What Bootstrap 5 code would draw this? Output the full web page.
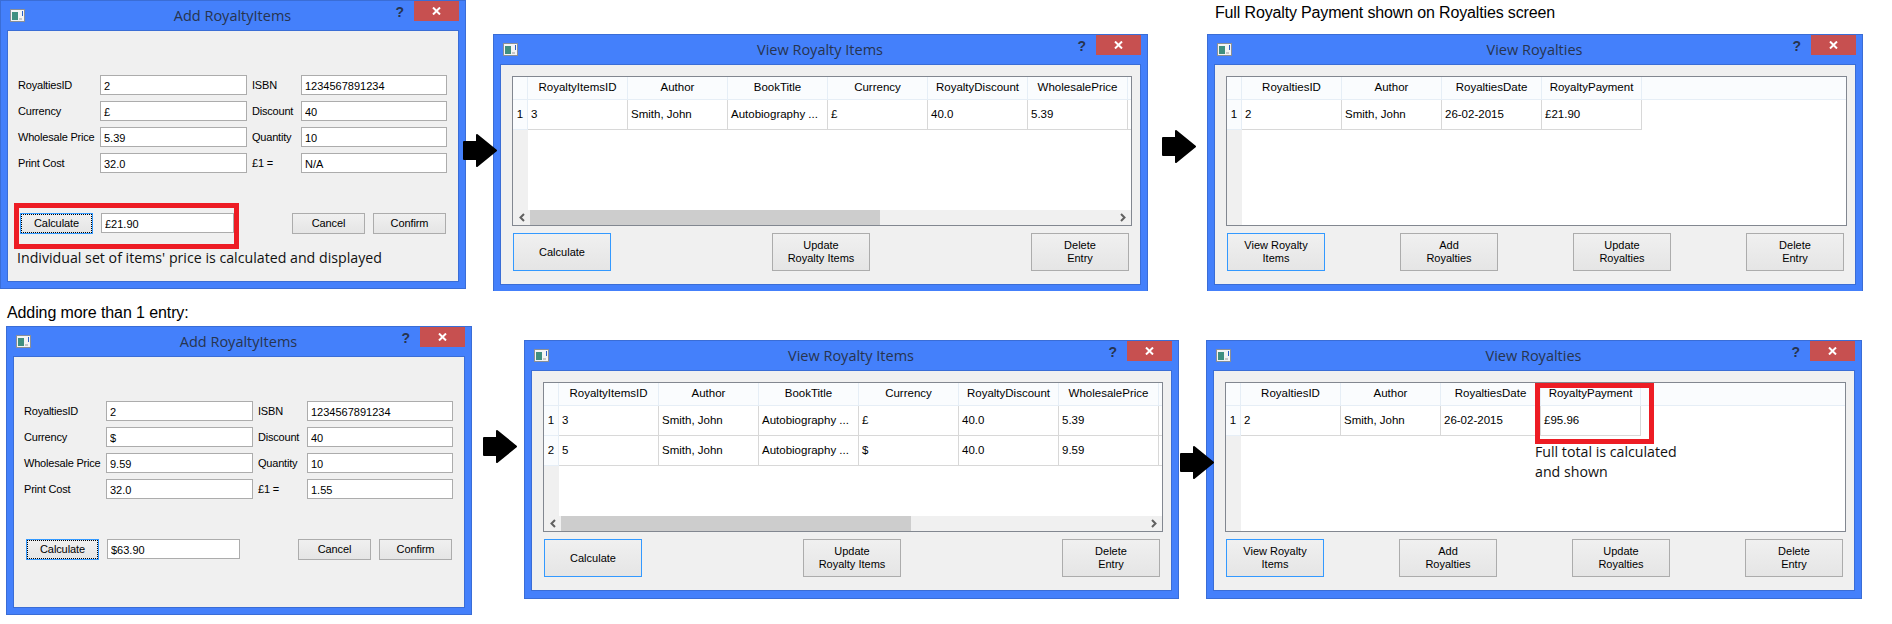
<!DOCTYPE html>
<html lang="en">
<head>
  <meta charset="UTF-8">
  <meta name="viewport" content="width=device-width, initial-scale=1">
  <title>Royalty screens</title>
  <link href="https://cdn.jsdelivr.net/npm/bootstrap@5.3.3/dist/css/bootstrap.min.css" rel="stylesheet">
  <style>
    body { background: #fff; color: #000; font-family: "Liberation Sans", Arial, sans-serif; font-size: 11px; }
    .desk { position: relative; width: 1892px; height: 624px; overflow: hidden; }

    /* windows sit on a free canvas */
    .app-win { position: absolute; background: #4480fb; border: 1px solid #3a6dd6; padding: 0 6px 6px; }
    #add1 { left: 0; top: 0; width: 466px; height: 289px; }
    #add2 { left: 6px; top: 326px; width: 466px; height: 289px; }
    #items1 { left: 493px; top: 34px; width: 655px; height: 257px; border-bottom: 0; }
    #royal1 { left: 1207px; top: 34px; width: 656px; height: 257px; border-bottom: 0; }
    #items2 { left: 524px; top: 340px; width: 655px; height: 259px; }
    #royal2 { left: 1206px; top: 340px; width: 656px; height: 259px; }

    .win-bar { display: grid; grid-template-columns: 1fr auto 1fr; height: 29px; margin: 0 0 0 3px; }
    .win-icon { width: 15px; height: 13px; margin-top: 8px; }
    .win-title { font-family: "Open Sans", sans-serif; font-size: 14.5px; line-height: 30px; color: #27344f; margin-right: 4px; }
    .win-help { font: bold 14px/16px "Liberation Sans", sans-serif; color: #27344f; margin: 3px 10px 0 0; }
    .win-close { width: 45px; height: 20px; background: #c75050; }
    .win-close svg { width: 9px; height: 8px; }

    .form-body { background: #f0f0f0; border: 1px solid #3a6dd6; padding: 44px 11px 0 10px; }
    .view-body { background: #f0f0f0; border: 1px solid #3a6dd6; height: 221px; padding: 11px 8px 0 11px; }

    .field-grid { display: grid; grid-template-columns: 82px 147px 54px 146px; row-gap: 6px; align-items: center; }
    .field-grid .field-side { padding-left: 5px; }
    .field-grid label { white-space: nowrap; letter-spacing: -.2px; }
    .qt-input.form-control { font-size: 11px; height: 20px; min-height: 20px; padding: 1px 3px 0; border: 1px solid #acacac; border-radius: 0; color: #000; background: #fff; line-height: 16px; }
    .result-input.form-control { width: 133px; flex: none; }

    .qt-btn.btn { font-size: 11px; line-height: 13px; padding: 0; color: #000; border: 1px solid #acacac; border-radius: 0; background: linear-gradient(#f0f0f0, #e5e5e5); }
    .qt-btn-sm.btn { width: 73px; height: 21px; letter-spacing: -.1px; }
    .qt-btn-lg.btn { width: 98px; height: 38px; }
    .qt-btn-on.btn { border-color: #3399ff; }
    .qt-btn-dot.btn { outline: 1px dotted #000; outline-offset: -2px; }
    .btn-row { margin: 40px 1px 0 2px; }
    .view-btns { margin: 7px 3px 0 1px; }
    .note-text { font-family: "Open Sans", sans-serif; font-size: 14.2px; line-height: 18px; color: #111; }
    .form-note { margin: 15px 0 0 -1px; white-space: nowrap; }

    .grid-box { height: 150px; border: 1px solid #828790; background: #fff; }
    .grid-view { background: linear-gradient(90deg, #f0f0f0 15px, #fff 15px); }
    .grid-tbl.table { table-layout: fixed; margin: 0; font-size: 11.5px; border-collapse: separate; border-spacing: 0; }
    .grid-wide.table { width: 715px; }
    .grid-tbl>:not(caption)>*>* { padding: 0 3px; border: 0; color: #000; background: transparent; box-shadow: none; vertical-align: middle; }
    .grid-tbl thead th { height: 23px; font-weight: 400; text-align: center; background: #fafcfe; border-right: 1px solid #e6eef6; border-bottom: 1px solid #e6eef6; width: 100px; white-space: nowrap; }
    .grid-tbl tbody td { height: 30px; border-right: 1px solid #d8d8d8; border-bottom: 1px solid #d8d8d8; white-space: nowrap; overflow: hidden; }
    .grid-tbl thead th.grid-corner { width: 15px; padding: 0; }
    .grid-tbl tbody th { width: 15px; padding: 0; font-weight: 400; text-align: center; background: #fafcfe; border-right: 1px solid #e6eef6; border-bottom: 1px solid #e6eef6; }
    .grid-tbl thead th.grid-fill { width: auto; border-right: 0; }
    .grid-tbl tbody td.grid-fill { border: 0; background: #fff; }

    .scroll-track { height: 15px; background: #f0f0f0; flex: none; }
    .scroll-arrow { width: 17px; display: flex; align-items: center; justify-content: center; }
    .scroll-arrow svg { width: 6px; height: 9px; }
    .scroll-thumb { width: 350px; background: #cdcdcd; }

    /* red marks and notes drawn over the screenshots */
    .red-mark { position: absolute; border: 5px solid #ed1c24; }
    #mark1 { left: 13px; top: 202px; width: 225px; height: 46px; }
    #mark2 { left: 1535px; top: 383px; width: 119px; height: 61px; }
    .float-note { position: absolute; left: 1535px; top: 442px; line-height: 20px; }
    .cap-text { position: absolute; font-size: 16px; line-height: 18px; white-space: nowrap; }
    #cap1 { left: 1215px; top: 4px; letter-spacing: -.15px; }
    #cap2 { left: 7px; top: 304px; letter-spacing: -.1px; }
    .flow-arrow { position: absolute; width: 34px; height: 33px; }
    #arrow1 { left: 463px; top: 134px; }
    #arrow2 { left: 1162px; top: 130px; }
    #arrow3 { left: 483px; top: 430px; }
    #arrow4 { left: 1180px; top: 446px; }
  </style>
</head>
<body>

<svg width="0" height="0" class="position-absolute">
  <symbol id="i-app" viewBox="0 0 15 13">
    <rect x=".5" y=".5" width="14" height="12" fill="#f4f4f4" stroke="#8a8f96"/>
    <rect x="2" y="3" width="6" height="8" fill="#3f8f80"/>
    <rect x="9" y="9" width="3" height="2" fill="#c8c8c8"/>
    <rect x="12" y="2" width="1" height="5" fill="#2a62c8"/>
  </symbol>
  <symbol id="i-x" viewBox="0 0 9 8">
    <path d="M1 .5 8 7.5M8 .5 1 7.5" stroke="#fff" stroke-width="2" fill="none"/>
  </symbol>
  <symbol id="i-left" viewBox="0 0 6 9">
    <path d="M5 1 1.5 4.5 5 8" stroke="#606060" stroke-width="2" fill="none"/>
  </symbol>
  <symbol id="i-right" viewBox="0 0 6 9">
    <path d="M1 1 4.5 4.5 1 8" stroke="#606060" stroke-width="2" fill="none"/>
  </symbol>
  <symbol id="i-arrow" viewBox="0 0 34 33">
    <path d="M1 8H14V1L33 16.5 14 32V25H1Z" fill="#000" stroke="#000" stroke-width="2" stroke-linejoin="round"/>
  </symbol>
</svg>

<main class="desk">

  <div class="cap-text" id="cap1">Full Royalty Payment shown on Royalties screen</div>
  <div class="cap-text" id="cap2">Adding more than 1 entry:</div>

  <!-- top row -->
  <section class="app-win d-flex flex-column" id="add1">
    <div class="win-bar">
      <svg class="win-icon"><use href="#i-app"/></svg>
      <div class="win-title">Add RoyaltyItems</div>
      <div class="d-flex justify-content-end align-items-start">
        <span class="win-help">?</span>
        <span class="win-close d-flex align-items-center justify-content-center"><svg><use href="#i-x"/></svg></span>
      </div>
    </div>
    <div class="form-body flex-grow-1">
      <div class="field-grid">
        <label>RoyaltiesID</label><input class="qt-input form-control" value="2">
        <label class="field-side">ISBN</label><input class="qt-input form-control" value="1234567891234">
        <label>Currency</label><input class="qt-input form-control" value="£">
        <label class="field-side">Discount</label><input class="qt-input form-control" value="40">
        <label>Wholesale Price</label><input class="qt-input form-control" value="5.39">
        <label class="field-side">Quantity</label><input class="qt-input form-control" value="10">
        <label>Print Cost</label><input class="qt-input form-control" value="32.0">
        <label class="field-side">£1 =</label><input class="qt-input form-control" value="N/A">
      </div>
      <div class="btn-row d-flex align-items-start">
        <button class="qt-btn qt-btn-sm qt-btn-on qt-btn-dot btn">Calculate</button>
        <input class="qt-input result-input form-control ms-2" value="£21.90">
        <button class="qt-btn qt-btn-sm btn ms-auto">Cancel</button>
        <button class="qt-btn qt-btn-sm btn ms-2">Confirm</button>
      </div>
      <div class="note-text form-note">Individual set of items' price is calculated and displayed</div>
    </div>
    <div class="red-mark" id="mark1"></div>
  </section>

  <section class="app-win" id="items1">
    <div class="win-bar">
      <svg class="win-icon"><use href="#i-app"/></svg>
      <div class="win-title">View Royalty Items</div>
      <div class="d-flex justify-content-end align-items-start">
        <span class="win-help">?</span>
        <span class="win-close d-flex align-items-center justify-content-center"><svg><use href="#i-x"/></svg></span>
      </div>
    </div>
    <div class="view-body">
      <div class="grid-box d-flex flex-column">
        <div class="grid-view flex-grow-1 overflow-hidden">
          <table class="grid-tbl grid-wide table">
            <thead><tr><th class="grid-corner"></th><th>RoyaltyItemsID</th><th>Author</th><th>BookTitle</th><th>Currency</th><th>RoyaltyDiscount</th><th>WholesalePrice</th><th></th></tr></thead>
            <tbody>
              <tr><th>1</th><td>3</td><td>Smith, John</td><td>Autobiography ...</td><td>£</td><td>40.0</td><td>5.39</td><td></td></tr>
            </tbody>
          </table>
        </div>
        <div class="scroll-track d-flex">
          <span class="scroll-arrow"><svg><use href="#i-left"/></svg></span>
          <span class="scroll-thumb"></span>
          <span class="flex-grow-1"></span>
          <span class="scroll-arrow"><svg><use href="#i-right"/></svg></span>
        </div>
      </div>
      <div class="view-btns d-flex justify-content-between">
        <button class="qt-btn qt-btn-lg qt-btn-on btn">Calculate</button>
        <button class="qt-btn qt-btn-lg btn">Update<br>Royalty Items</button>
        <button class="qt-btn qt-btn-lg btn">Delete<br>Entry</button>
      </div>
    </div>
  </section>

  <section class="app-win" id="royal1">
    <div class="win-bar">
      <svg class="win-icon"><use href="#i-app"/></svg>
      <div class="win-title">View Royalties</div>
      <div class="d-flex justify-content-end align-items-start">
        <span class="win-help">?</span>
        <span class="win-close d-flex align-items-center justify-content-center"><svg><use href="#i-x"/></svg></span>
      </div>
    </div>
    <div class="view-body">
      <div class="grid-box d-flex flex-column">
        <div class="grid-view flex-grow-1 overflow-hidden">
          <table class="grid-tbl table">
            <thead><tr><th class="grid-corner"></th><th>RoyaltiesID</th><th>Author</th><th>RoyaltiesDate</th><th>RoyaltyPayment</th><th class="grid-fill"></th></tr></thead>
            <tbody>
              <tr><th>1</th><td>2</td><td>Smith, John</td><td>26-02-2015</td><td>£21.90</td><td class="grid-fill"></td></tr>
            </tbody>
          </table>
        </div>
      </div>
      <div class="view-btns d-flex justify-content-between">
        <button class="qt-btn qt-btn-lg qt-btn-on btn">View Royalty<br>Items</button>
        <button class="qt-btn qt-btn-lg btn">Add<br>Royalties</button>
        <button class="qt-btn qt-btn-lg btn">Update<br>Royalties</button>
        <button class="qt-btn qt-btn-lg btn">Delete<br>Entry</button>
      </div>
    </div>
  </section>

  <!-- bottom row -->
  <section class="app-win d-flex flex-column" id="add2">
    <div class="win-bar">
      <svg class="win-icon"><use href="#i-app"/></svg>
      <div class="win-title">Add RoyaltyItems</div>
      <div class="d-flex justify-content-end align-items-start">
        <span class="win-help">?</span>
        <span class="win-close d-flex align-items-center justify-content-center"><svg><use href="#i-x"/></svg></span>
      </div>
    </div>
    <div class="form-body flex-grow-1">
      <div class="field-grid">
        <label>RoyaltiesID</label><input class="qt-input form-control" value="2">
        <label class="field-side">ISBN</label><input class="qt-input form-control" value="1234567891234">
        <label>Currency</label><input class="qt-input form-control" value="$">
        <label class="field-side">Discount</label><input class="qt-input form-control" value="40">
        <label>Wholesale Price</label><input class="qt-input form-control" value="9.59">
        <label class="field-side">Quantity</label><input class="qt-input form-control" value="10">
        <label>Print Cost</label><input class="qt-input form-control" value="32.0">
        <label class="field-side">£1 =</label><input class="qt-input form-control" value="1.55">
      </div>
      <div class="btn-row d-flex align-items-start">
        <button class="qt-btn qt-btn-sm qt-btn-on qt-btn-dot btn">Calculate</button>
        <input class="qt-input result-input form-control ms-2" value="$63.90">
        <button class="qt-btn qt-btn-sm btn ms-auto">Cancel</button>
        <button class="qt-btn qt-btn-sm btn ms-2">Confirm</button>
      </div>
    </div>
  </section>

  <section class="app-win" id="items2">
    <div class="win-bar">
      <svg class="win-icon"><use href="#i-app"/></svg>
      <div class="win-title">View Royalty Items</div>
      <div class="d-flex justify-content-end align-items-start">
        <span class="win-help">?</span>
        <span class="win-close d-flex align-items-center justify-content-center"><svg><use href="#i-x"/></svg></span>
      </div>
    </div>
    <div class="view-body">
      <div class="grid-box d-flex flex-column">
        <div class="grid-view flex-grow-1 overflow-hidden">
          <table class="grid-tbl grid-wide table">
            <thead><tr><th class="grid-corner"></th><th>RoyaltyItemsID</th><th>Author</th><th>BookTitle</th><th>Currency</th><th>RoyaltyDiscount</th><th>WholesalePrice</th><th></th></tr></thead>
            <tbody>
              <tr><th>1</th><td>3</td><td>Smith, John</td><td>Autobiography ...</td><td>£</td><td>40.0</td><td>5.39</td><td></td></tr>
              <tr><th>2</th><td>5</td><td>Smith, John</td><td>Autobiography ...</td><td>$</td><td>40.0</td><td>9.59</td><td></td></tr>
            </tbody>
          </table>
        </div>
        <div class="scroll-track d-flex">
          <span class="scroll-arrow"><svg><use href="#i-left"/></svg></span>
          <span class="scroll-thumb"></span>
          <span class="flex-grow-1"></span>
          <span class="scroll-arrow"><svg><use href="#i-right"/></svg></span>
        </div>
      </div>
      <div class="view-btns d-flex justify-content-between">
        <button class="qt-btn qt-btn-lg qt-btn-on btn">Calculate</button>
        <button class="qt-btn qt-btn-lg btn">Update<br>Royalty Items</button>
        <button class="qt-btn qt-btn-lg btn">Delete<br>Entry</button>
      </div>
    </div>
  </section>

  <section class="app-win" id="royal2">
    <div class="win-bar">
      <svg class="win-icon"><use href="#i-app"/></svg>
      <div class="win-title">View Royalties</div>
      <div class="d-flex justify-content-end align-items-start">
        <span class="win-help">?</span>
        <span class="win-close d-flex align-items-center justify-content-center"><svg><use href="#i-x"/></svg></span>
      </div>
    </div>
    <div class="view-body">
      <div class="grid-box d-flex flex-column">
        <div class="grid-view flex-grow-1 overflow-hidden">
          <table class="grid-tbl table">
            <thead><tr><th class="grid-corner"></th><th>RoyaltiesID</th><th>Author</th><th>RoyaltiesDate</th><th>RoyaltyPayment</th><th class="grid-fill"></th></tr></thead>
            <tbody>
              <tr><th>1</th><td>2</td><td>Smith, John</td><td>26-02-2015</td><td>£95.96</td><td class="grid-fill"></td></tr>
            </tbody>
          </table>
        </div>
      </div>
      <div class="view-btns d-flex justify-content-between">
        <button class="qt-btn qt-btn-lg qt-btn-on btn">View Royalty<br>Items</button>
        <button class="qt-btn qt-btn-lg btn">Add<br>Royalties</button>
        <button class="qt-btn qt-btn-lg btn">Update<br>Royalties</button>
        <button class="qt-btn qt-btn-lg btn">Delete<br>Entry</button>
      </div>
    </div>
  </section>

  <div class="red-mark" id="mark2"></div>
  <div class="note-text float-note">Full total is calculated<br>and shown</div>

  <svg class="flow-arrow" id="arrow1"><use href="#i-arrow"/></svg>
  <svg class="flow-arrow" id="arrow2"><use href="#i-arrow"/></svg>
  <svg class="flow-arrow" id="arrow3"><use href="#i-arrow"/></svg>
  <svg class="flow-arrow" id="arrow4"><use href="#i-arrow"/></svg>

</main>

</body>
</html>
